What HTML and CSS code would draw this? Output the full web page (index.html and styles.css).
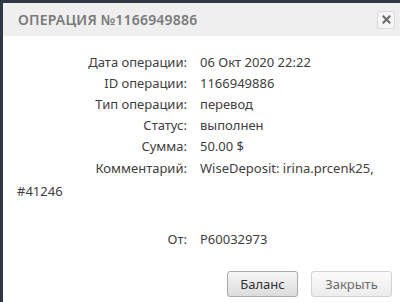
FILE: index.html
```html
<!DOCTYPE html>
<html>
<head>
    <title>Операция №1166949886</title>
    <link rel="stylesheet" href="styles.css">
</head>
<body>
    <div class="dialog">
        <div class="dialog-head">
            <span class="dialog-title">Операция №1166949886</span>
            <span class="close-btn">
                <svg width="9" height="9" viewBox="0 0 9 9">
                    <path d="M1.5 1.5 L7.5 7.5 M7.5 1.5 L1.5 7.5" stroke="#6f6f6f" stroke-width="2.2" stroke-linecap="square"/>
                </svg>
            </span>
        </div>
        <div class="dialog-body">
            <div class="row"><span class="label">Дата операции:</span>06 Окт 2020 22:22</div>
            <div class="row"><span class="label">ID операции:</span>1166949886</div>
            <div class="row"><span class="label">Тип операции:</span>перевод</div>
            <div class="row"><span class="label">Статус:</span>выполнен</div>
            <div class="row"><span class="label">Сумма:</span>50.00 $</div>
            <div class="row comment"><span class="label">Комментарий:</span>WiseDeposit: irina.prcenk25,</div>
            <div class="row comment">#41246</div>
            <div class="row from"><span class="label">От:</span>P60032973</div>
        </div>
        <div class="dialog-foot">
            <button class="btn">Баланс</button>
            <button class="btn btn-light">Закрыть</button>
        </div>
    </div>
</body>
</html>
```

FILE: styles.css
```css
body {
    margin: 0;
    height: 302px;
    overflow: hidden;
    background: #2e3944;
    font-family: "Noto Sans", "DejaVu Sans", sans-serif;
}

.dialog {
    margin: 3px 0 0 3px;
    height: 299px;
    background: #fff;
    display: flex;
    flex-direction: column;
}

.dialog-head {
    height: 33px;
    background: #efefef;
    display: flex;
    justify-content: space-between;
    align-items: center;
    padding: 0 5px 0 15px;
}

.dialog-title {
    text-transform: uppercase;
    font-size: 14px;
    font-weight: 600;
    letter-spacing: 0.2px;
    color: #7a7a7a;
}

.close-btn {
    width: 16px;
    height: 16px;
    border: 1px solid #dadada;
    border-radius: 3px;
    background: #f6f6f6;
    display: flex;
    align-items: center;
    justify-content: center;
}

.dialog-body {
    padding: 16px 14px 0 14px;
    font-size: 13px;
    color: #404040;
    line-height: 21px;
}

.label {
    display: inline-block;
    width: 183px;
    padding-right: 13px;
    box-sizing: border-box;
    text-align: right;
}

.comment {
    line-height: 23px;
}

.from {
    margin-top: 26px;
}

.dialog-foot {
    display: flex;
    justify-content: flex-end;
    gap: 13px;
    padding: 21px 8px 0 0;
}

.btn {
    font-family: "Noto Sans", "DejaVu Sans", sans-serif;
    font-size: 13px;
    color: #333;
    height: 26px;
    padding: 0 12px;
    border: 1px solid #a9a9a9;
    border-radius: 3px;
    background: linear-gradient(#f6f6f6, #dcdcdc);
    width: 71px;
}

.btn-light {
    width: 81px;
    color: #6b6b6b;
    border-color: #d3d3d3;
    background: linear-gradient(#fbfbfb, #ececec);
}
```
